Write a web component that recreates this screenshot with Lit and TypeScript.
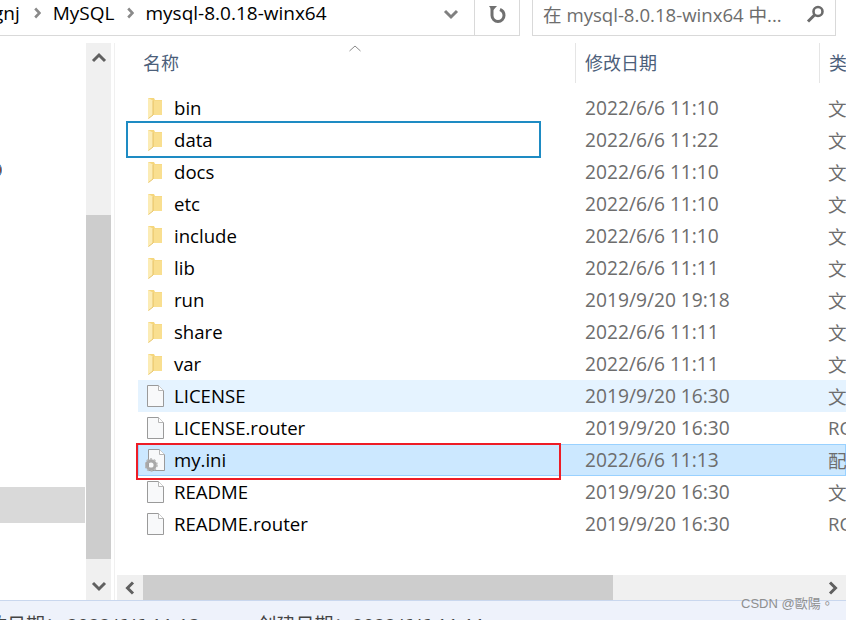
import { LitElement, html, css, svg } from "lit";
import { customElement } from "lit/decorators.js";

type Row = { name: string; date: string; kind: string; icon: "folder" | "file" | "ini"; cls?: string };

const ROWS: Row[] = [
  { name: "bin", date: "2022/6/6 11:10", kind: "文", icon: "folder" },
  { name: "data", date: "2022/6/6 11:22", kind: "文", icon: "folder" },
  { name: "docs", date: "2022/6/6 11:10", kind: "文", icon: "folder" },
  { name: "etc", date: "2022/6/6 11:10", kind: "文", icon: "folder" },
  { name: "include", date: "2022/6/6 11:10", kind: "文", icon: "folder" },
  { name: "lib", date: "2022/6/6 11:11", kind: "文", icon: "folder" },
  { name: "run", date: "2019/9/20 19:18", kind: "文", icon: "folder" },
  { name: "share", date: "2022/6/6 11:11", kind: "文", icon: "folder" },
  { name: "var", date: "2022/6/6 11:11", kind: "文", icon: "folder" },
  { name: "LICENSE", date: "2019/9/20 16:30", kind: "文", icon: "file", cls: "hover" },
  { name: "LICENSE.router", date: "2019/9/20 16:30", kind: "RO", icon: "file" },
  { name: "my.ini", date: "2022/6/6 11:13", kind: "配", icon: "ini", cls: "selected" },
  { name: "README", date: "2019/9/20 16:30", kind: "文", icon: "file" },
  { name: "README.router", date: "2019/9/20 16:30", kind: "RO", icon: "file" },
];

const folderIcon = svg`<svg width="16" height="22" viewBox="0 0 16 22">
  <path d="M0 1h6l1 2h7v15H0z" fill="#f5d67c"/>
  <path d="M5.500 3.500h8.500V18H5.500z" fill="#f9df90"/>
  <path d="M0 1l5 2.500V18L0 22z" fill="#fcecb5"/>
  <path d="M5 3.500V18L.5 21.500" fill="none" stroke="#e8c468"/>
</svg>`;

const fileIcon = svg`<svg width="18" height="22" viewBox="0 0 18 22">
  <path d="M.5.500h11l5 5v16H.5z" fill="#f8f9fa" stroke="#9a9a9a"/>
  <path d="M11.500.500v5h5" fill="#fff" stroke="#b5b5b5"/>
</svg>`;

const iniIcon = svg`<svg width="22" height="24" viewBox="0 0 22 24">
  <path d="M3.500 1.500h11l5 5v16H3.500z" fill="#f8f9fa" stroke="#9a9a9a"/>
  <path d="M14.500 1.500v5h5" fill="#fff" stroke="#b5b5b5"/>
  <circle cx="6" cy="17" r="4.200" fill="none" stroke="#a8a8a8" stroke-width="3.200"/>
  <circle cx="6" cy="17" r="6" fill="none" stroke="#b8b8b8" stroke-width="1.600" stroke-dasharray="2 1.800"/>
</svg>`;

@customElement("app-root")
export class AppRoot extends LitElement {
  static styles = css`
    :host {
      display: block;
      position: relative;
      width: 846px;
      height: 620px;
      overflow: hidden;
      background: #fff;
      color: #000;
      font-family: "Open Sans", "Noto Sans", "Noto Sans CJK SC", sans-serif;
      font-size: 18.6px;
    }
    .toolbar {
      display: flex;
      height: 36px;
    }
    .crumbs {
      flex: none;
      width: 428px;
      height: 36px;
      box-sizing: border-box;
      border-bottom: 1px solid #d9d9d9;
      display: flex;
      align-items: center;
      gap: 12px;
      padding-bottom: 9px;
      white-space: nowrap;
      font-size: 19px;
    }
    .crumbs .cut {
      margin-left: -7px;
      margin-right: 2px;
    }
    .nav-btn {
      flex: none;
      box-sizing: border-box;
      width: 46px;
      height: 36px;
      border-bottom: 1px solid #d9d9d9;
      display: flex;
      align-items: center;
      justify-content: center;
      padding-bottom: 7px;
    }
    .nav-btn.refresh {
      border-left: 1px solid #d9d9d9;
      border-right: 1px solid #d9d9d9;
    }
    .search {
      flex: none;
      width: 304px;
      height: 36px;
      box-sizing: border-box;
      margin-left: 12px;
      border: 1px solid #d9d9d9;
      border-top: 0;
      display: flex;
      align-items: center;
      justify-content: space-between;
      padding: 0 11px 8px 10px;
      color: #6d6d6d;
      white-space: nowrap;
    }
    .main {
      display: flex;
      height: 557px;
      margin-top: 7px;
    }
    .tree {
      flex: none;
      width: 85px;
      padding-top: 444px;
      box-sizing: border-box;
    }
    .tree-sel {
      height: 36px;
      background: #d9d9d9;
    }
    .vbar {
      flex: none;
      width: 25px;
      margin-left: 1px;
      background: #f0f0f0;
      display: flex;
      flex-direction: column;
      align-items: center;
    }
    .vbar .arrow {
      height: 29px;
      flex: none;
      display: flex;
      align-items: center;
      justify-content: center;
    }
    .vbar .space {
      flex: none;
      height: 143px;
    }
    .vbar .space.low {
      height: 12px;
    }
    .vbar .thumb {
      align-self: stretch;
      flex: 1;
      background: #cdcdcd;
    }
    .pane {
      flex: 1;
      min-width: 0;
      margin-left: 3px;
      border-left: 1px solid #f0f0f0;
      display: flex;
      flex-direction: column;
      position: relative;
    }
    .head {
      height: 40px;
      flex: none;
      display: flex;
      color: #4c607a;
      font-size: 18px;
      position: relative;
    }
    .head div {
      box-sizing: border-box;
      line-height: 41px;
    }
    .col-name {
      flex: none;
      width: 460px;
      padding-left: 28px;
    }
    .col-date {
      flex: none;
      width: 244px;
      border-left: 1px solid #e5e5e5;
      padding-left: 9px;
    }
    .col-kind {
      flex: 1;
      border-left: 1px solid #e5e5e5;
      padding-left: 9px;
      white-space: nowrap;
      overflow: hidden;
    }
    .sort {
      position: absolute;
      left: 234px;
      top: 2px;
    }
    .list {
      flex: 1;
      padding-top: 9px;
    }
    .row {
      height: 32px;
      margin-left: 23px;
      display: flex;
      align-items: center;
      box-sizing: border-box;
      white-space: nowrap;
    }
    .row.hover {
      background: #e5f3ff;
    }
    .row.selected {
      background: #cce8ff;
      box-shadow: inset 0 0 0 1px #99d1ff;
    }
    .icon {
      flex: none;
      width: 36px;
      display: flex;
      justify-content: center;
    }
    .name {
      flex: none;
      width: 411px;
      padding-bottom: 2px;
    }
    .date {
      flex: none;
      width: 243px;
      color: #6d6d6d;
      font-size: 19.2px;
      padding-bottom: 2px;
    }
    .kind {
      flex: 1;
      color: #6d6d6d;
      overflow: hidden;
      padding-bottom: 2px;
    }
    .hbar {
      height: 25px;
      flex: none;
      margin-left: 2px;
      background: #f0f0f0;
      display: flex;
      align-items: center;
    }
    .hbar .arrow {
      flex: none;
      width: 26px;
      display: flex;
      justify-content: center;
    }
    .hbar .thumb {
      flex: none;
      width: 470px;
      height: 25px;
      background: #cdcdcd;
    }
    .hbar .rest {
      flex: 1;
    }
    .status {
      height: 20px;
      box-sizing: border-box;
      border-top: 1px solid #c9d7ee;
      background: #eef2fb;
      padding-left: 67px;
      display: flex;
      gap: 58px;
      color: #444;
      font-size: 19px;
      line-height: 49px;
      white-space: nowrap;
      overflow: hidden;
      position: relative;
    }
    .status .cut {
      position: absolute;
      left: -12px;
    }
    .mark {
      position: absolute;
      box-sizing: border-box;
    }
    .mark.blue {
      left: 126px;
      top: 121px;
      width: 415px;
      height: 37px;
      border: 2px solid #1e8bc3;
    }
    .mark.red {
      left: 136px;
      top: 443px;
      width: 425px;
      height: 37px;
      border: 2px solid #ee1c25;
    }
    .dot {
      position: absolute;
      left: -8px;
      top: 163px;
      width: 10px;
      height: 14px;
      border-radius: 50%;
      border: 1px solid #3a8fd8;
      background: #a03a20;
      box-sizing: border-box;
    }
    .watermark {
      position: absolute;
      left: 741px;
      top: 593px;
      font-size: 13px;
      color: #8f8f8f;
      font-family: "Liberation Sans", "Noto Sans CJK TC", sans-serif;
      white-space: nowrap;
    }
  `;

  private vchevron(up: boolean, color = "#606060") {
    const d = up ? "M2 10L8 4l6 6" : "M2 4l6 6 6-6";
    return html`<svg width="16" height="14" viewBox="0 0 16 14">
      <path d=${d} fill="none" stroke=${color} stroke-width="3" />
    </svg>`;
  }

  private hchevron(left: boolean) {
    const d = left ? "M10 1.500L4.500 7l5.500 5.500" : "M4 1.500L9.500 7 4 12.500";
    return html`<svg width="14" height="14" viewBox="0 0 14 14">
      <path d=${d} fill="none" stroke="#606060" stroke-width="3" />
    </svg>`;
  }

  private crumbSep() {
    return html`<svg width="7" height="12" viewBox="0 0 7 12">
      <path d="M1.200 1.500L5.500 6l-4.300 4.500" fill="none" stroke="#8a8a8a" stroke-width="2.600" />
    </svg>`;
  }

  private rowIcon(kind: Row["icon"]) {
    if (kind === "folder") return folderIcon;
    if (kind === "ini") return iniIcon;
    return fileIcon;
  }

  render() {
    return html`
      <div class="toolbar">
        <div class="crumbs">
          <span class="cut">gnj</span>${this.crumbSep()}<span>MySQL</span>${this.crumbSep()}<span>mysql-8.0.18-winx64</span>
        </div>
        <div class="nav-btn">${this.vchevron(false, "#808080")}</div>
        <div class="nav-btn refresh">
          <svg width="18" height="19" viewBox="0 0 18 19">
            <path d="M4 3v7.500a6 6 0 0 0 12 0c0-3-1.500-5-4-6" fill="none" stroke="#707070" stroke-width="3" />
            <path d="M1 1h8L4.500 6z" fill="#707070" />
          </svg>
        </div>
        <div class="search">
          <span>在 mysql-8.0.18-winx64 中...</span>
          <svg width="18" height="18" viewBox="0 0 18 18">
            <circle cx="12" cy="6.500" r="4.500" fill="none" stroke="#6b6b6b" stroke-width="2.600" />
            <path d="M8.500 10L2 16.500" stroke="#6b6b6b" stroke-width="3" />
          </svg>
        </div>
      </div>
      <div class="main">
        <div class="tree"><div class="tree-sel"></div></div>
        <div class="vbar">
          <div class="arrow">${this.vchevron(true)}</div>
          <div class="space"></div>
          <div class="thumb"></div>
          <div class="space low"></div>
          <div class="arrow">${this.vchevron(false)}</div>
        </div>
        <div class="pane">
          <div class="head">
            <div class="col-name">名称</div>
            <div class="col-date">修改日期</div>
            <div class="col-kind">类型</div>
            <svg class="sort" width="12" height="7" viewBox="0 0 12 7"><path d="M.5 6L6 1l5.500 5" fill="none" stroke="#8a8a8a" /></svg>
          </div>
          <div class="list">
            ${ROWS.map(
              (r) => html`
                <div class="row ${r.cls ?? ""}">
                  <div class="icon">${this.rowIcon(r.icon)}</div>
                  <div class="name">${r.name}</div>
                  <div class="date">${r.date}</div>
                  <div class="kind">${r.kind}</div>
                </div>
              `
            )}
          </div>
          <div class="hbar">
            <div class="arrow">${this.hchevron(true)}</div>
            <div class="thumb"></div>
            <div class="rest"></div>
            <div class="arrow">${this.hchevron(false)}</div>
          </div>
        </div>
      </div>
      <div class="status">
        <span class="cut">改日期：</span>
        <span>2022/6/6 11:13</span>
        <span>创建日期：2022/6/6 11:11</span>
      </div>
      <div class="mark blue"></div>
      <div class="mark red"></div>
      <div class="dot"></div>
      <div class="watermark">CSDN @歐陽。</div>
    `;
  }
}
